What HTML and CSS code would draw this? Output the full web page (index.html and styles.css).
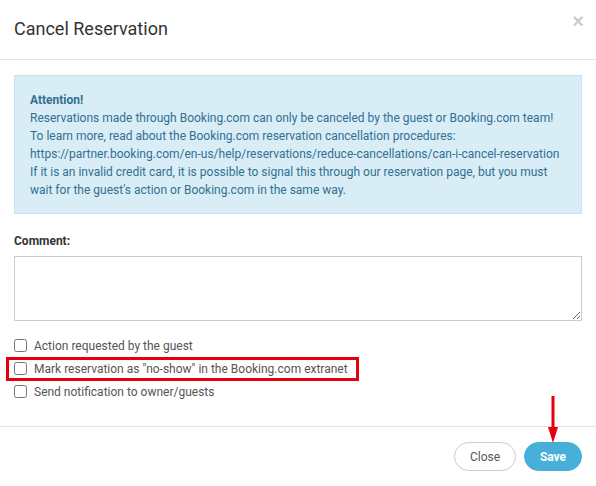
FILE: index.html
```html
<!DOCTYPE html>
<html lang="en">
<head>
<meta charset="utf-8">
<title>Cancel Reservation</title>
<link rel="stylesheet" href="styles.css">
</head>
<body>
<div class="modal">
  <div class="modal-header">
    <h4 class="modal-title">Cancel Reservation</h4>
    <button class="close" type="button" aria-label="Close">×</button>
  </div>
  <div class="modal-body">
    <div class="alert">
      <strong>Attention!</strong><br>
      Reservations made through Booking.com can only be canceled by the guest or Booking.com team!<br>
      To learn more, read about the Booking.com reservation cancellation procedures:<br>
      https://partner.booking.com/en-us/help/reservations/reduce-cancellations/can-i-cancel-reservation<br>
      If it is an invalid credit card, it is possible to signal this through our reservation page, but you must wait for the guest's action or Booking.com in the same way.
    </div>
    <label class="field-label" for="comment">Comment:</label>
    <textarea id="comment" class="comment"></textarea>
    <div class="checks">
      <label class="check"><input type="checkbox"> Action requested by the guest</label>
      <label class="check highlight"><input type="checkbox"> Mark reservation as "no-show" in the Booking.com extranet</label>
      <label class="check"><input type="checkbox"> Send notification to owner/guests</label>
    </div>
  </div>
  <div class="modal-footer">
    <button class="btn btn-default" type="button">Close</button>
    <button class="btn btn-primary" type="button">Save
      <svg class="arrow" width="14" height="48" viewBox="0 0 14 48" aria-hidden="true">
        <line x1="7" y1="0" x2="7" y2="34" stroke="#e4000f" stroke-width="3"/>
        <polygon points="2,31 12,31 7,47" fill="#e4000f"/>
      </svg>
    </button>
  </div>
</div>
</body>
</html>
```

FILE: styles.css
```css
* { box-sizing: border-box; }
html, body { margin: 0; padding: 0; background: #fff; }
body {
  font-family: Roboto, "Liberation Sans", Arial, sans-serif;
  font-size: 12px;
  line-height: 18px;
  color: #333;
  width: 596px;
  height: 486px;
  overflow: hidden;
}
.modal { width: 596px; }
.modal-header {
  height: 60px;
  padding: 0 14px;
  border-bottom: 1px solid #e5e5e5;
  display: flex;
  align-items: center;
  justify-content: space-between;
}
.modal-title {
  margin: 0;
  font-size: 18px;
  font-weight: 400;
  line-height: 24px;
  color: #333;
  padding-bottom: 2px;
}
.close {
  border: 0;
  background: transparent;
  padding: 0;
  margin: 0 -2px 0 0;
  font-family: "Liberation Sans", Arial, sans-serif;
  font-size: 20px;
  font-weight: 700;
  line-height: 20px;
  color: #000;
  opacity: 0.2;
  align-self: flex-start;
  margin-top: 11px;
  cursor: pointer;
}
.modal-body { padding: 15px 14px 0; }
.alert {
  background: #d9edf7;
  border: 1px solid #bce8f1;
  color: #31708f;
  padding: 15px 15px 14px;
  line-height: 18px;
}
.alert strong { font-weight: 700; }
.field-label {
  display: block;
  margin-top: 18px;
  font-weight: 700;
  color: #333;
  line-height: 18px;
}
.comment {
  display: block;
  width: 100%;
  height: 65px;
  margin-top: 6px;
  border: 1px solid #ccc;
  border-radius: 0;
  resize: vertical;
  font: inherit;
  padding: 6px 10px;
}
.checks {
  padding-top: 13px;
  padding-bottom: 23px;
  display: flex;
  flex-direction: column;
  align-items: flex-start;
}
.check {
  position: relative;
  display: inline-flex;
  align-items: center;
  height: 23px;
  color: #555;
  font-size: 12px;
  white-space: nowrap;
}
.check input {
  width: 13px;
  height: 13px;
  margin: 0 7px 0 0;
}
.highlight::after {
  content: "";
  position: absolute;
  top: 0;
  bottom: -1px;
  left: -8px;
  right: -11px;
  border: 3px solid #e4000f;
  pointer-events: none;
}
.modal-footer {
  border-top: 1px solid #e5e5e5;
  padding: 15px 14px 0;
  display: flex;
  justify-content: flex-end;
  gap: 8px;
}
.btn {
  position: relative;
  height: 29px;
  border-radius: 15px;
  font-family: Roboto, "Liberation Sans", Arial, sans-serif;
  font-size: 12px;
  padding: 0;
  cursor: pointer;
}
.btn-default {
  background: #fff;
  border: 1px solid #ccc;
  color: #555;
  width: 62px;
}
.btn-primary {
  background: #46b0d9;
  border: 1px solid #46b0d9;
  color: #fff;
  font-weight: 700;
  width: 58px;
}
.arrow {
  position: absolute;
  left: 21px;
  top: -47px;
}
```
